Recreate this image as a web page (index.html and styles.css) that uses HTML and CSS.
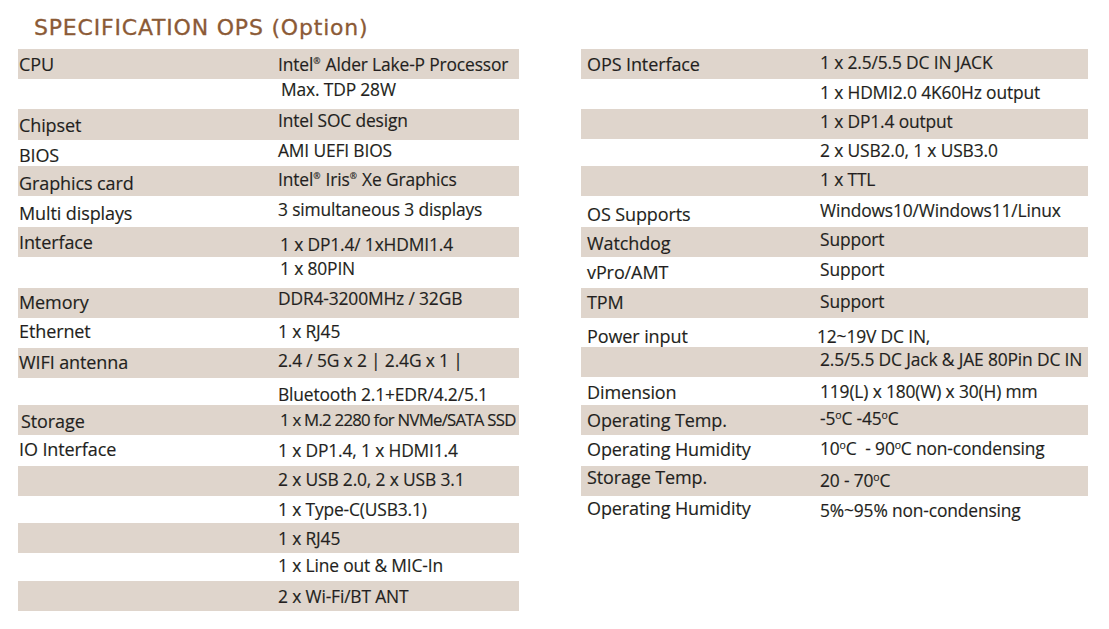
FILE: index.html
```html
<!DOCTYPE html>
<html lang="en">
<head>
<meta charset="utf-8">
<title>Specification OPS (Option)</title>
<link rel="stylesheet" href="styles.css">
</head>
<body>
<div class="page">
  <h1 class="title">SPECIFICATION OPS (Option)</h1>
  <div class="tables">
    <div class="spec spec-left">
      <div class="row h30"><span class="k c16">CPU</span><span class="v c16">Intel<sup>®</sup> Alder Lake-P Processor</span></div>
      <div class="row h30"><span class="k"></span><span class="v c10 in3">Max. TDP 28W</span></div>
      <div class="row h31"><span class="k c17">Chipset</span><span class="v c12">Intel SOC design</span></div>
      <div class="row h26"><span class="k c16">BIOS</span><span class="v c10">AMI UEFI BIOS</span></div>
      <div class="row h30"><span class="k c18">Graphics card</span><span class="v c14">Intel<sup>®</sup> Iris<sup>®</sup> Xe Graphics</span></div>
      <div class="row h31"><span class="k c18">Multi displays</span><span class="v c14">3 simultaneous 3 displays</span></div>
      <div class="row h30"><span class="k c16">Interface</span><span class="v c18 in2">1 x DP1.4/ 1xHDMI1.4</span></div>
      <div class="row h31"><span class="k"></span><span class="v c12 in2">1 x 80PIN</span></div>
      <div class="row h30"><span class="k c15">Memory</span><span class="v c10">DDR4-3200MHz / 32GB</span></div>
      <div class="row h30"><span class="k c14">Ethernet</span><span class="v c14">1 x RJ45</span></div>
      <div class="row h30"><span class="k c15">WIFI antenna</span><span class="v c13">2.4 / 5G x 2 | 2.4G x 1 |</span></div>
      <div class="row h27"><span class="k"></span><span class="v c17">Bluetooth 2.1+EDR/4.2/5.1</span></div>
      <div class="row h30"><span class="k c17 in2">Storage</span><span class="v c16 in2 tight">1 x M.2 2280 for NVMe/SATA SSD</span></div>
      <div class="row h31"><span class="k c15">IO Interface</span><span class="v c16">1 x DP1.4, 1 x HDMI1.4</span></div>
      <div class="row h30"><span class="k"></span><span class="v c14">2 x USB 2.0, 2 x USB 3.1</span></div>
      <div class="row h27"><span class="k"></span><span class="v c14">1 x Type-C(USB3.1)</span></div>
      <div class="row h30"><span class="k"></span><span class="v c16">1 x RJ45</span></div>
      <div class="row h28"><span class="k"></span><span class="v c13">1 x Line out &amp; MIC-In</span></div>
      <div class="row h30"><span class="k"></span><span class="v c16">2 x Wi-Fi/BT ANT</span></div>
    </div>
    <div class="spec spec-right">
      <div class="row h30"><span class="k c16">OPS Interface</span><span class="v c14">1 x 2.5/5.5 DC IN JACK</span></div>
      <div class="row h30"><span class="k"></span><span class="v c14">1 x HDMI2.0 4K60Hz output</span></div>
      <div class="row h30"><span class="k"></span><span class="v c13">1 x DP1.4 output</span></div>
      <div class="row h27"><span class="k"></span><span class="v c12">2 x USB2.0, 1 x USB3.0</span></div>
      <div class="row h30"><span class="k"></span><span class="v c14">1 x TTL</span></div>
      <div class="row h31"><span class="k c19">OS Supports</span><span class="v c15">Windows10/Windows11/Linux</span></div>
      <div class="row h30"><span class="k c17">Watchdog</span><span class="v c13">Support</span></div>
      <div class="row h31"><span class="k c16">vPro/AMT</span><span class="v c13">Support</span></div>
      <div class="row h30"><span class="k c15">TPM</span><span class="v c14">Support</span></div>
      <div class="row h29"><span class="k c19">Power input</span><span class="v c19 out3">12~19V DC IN,</span></div>
      <div class="row h30"><span class="k"></span><span class="v c13">2.5/5.5 DC Jack &amp; JAE 80Pin DC IN</span></div>
      <div class="row h28"><span class="k c16">Dimension</span><span class="v c15">119(L) x 180(W) x 30(H) mm</span></div>
      <div class="row h30"><span class="k c16">Operating Temp.</span><span class="v c14">-5<sup class="deg">o</sup>C -45<sup class="deg">o</sup>C</span></div>
      <div class="row h31"><span class="k c15">Operating Humidity</span><span class="v c14">10<sup class="deg">o</sup>C&nbsp; - 90<sup class="deg">o</sup>C non-condensing</span></div>
      <div class="row h30"><span class="k c12">Storage Temp.</span><span class="v c15">20 - 70<sup class="deg">o</sup>C</span></div>
      <div class="row h29"><span class="k c13">Operating Humidity</span><span class="v c15">5%~95% non-condensing</span></div>
    </div>
  </div>
</div>
</body>
</html>
```
FILE: styles.css
```css
* { box-sizing: border-box; }

html, body {
  margin: 0;
  padding: 0;
  background: #ffffff;
}

.page {
  width: 1109px;
  height: 629px;
  color: #231f20;
  font-family: "Open Sans", "Noto Sans", sans-serif;
}

.title {
  margin: 0;
  height: 49px;
  padding: 17px 0 0 34px;
  font-family: "DejaVu Sans", sans-serif;
  font-weight: normal;
  font-size: 22px;
  line-height: 22px;
  letter-spacing: 0.8px;
  color: #8b5a36;
  -webkit-text-stroke: 0.3px #8b5a36;
}

.tables {
  display: flex;
  padding-left: 18px;
  gap: 62px;
}

.spec {
  display: flex;
  flex-direction: column;
}

.spec-left { width: 501px; }
.spec-right { width: 507px; }

.row {
  display: grid;
  align-items: start;
}

.spec-left .row { grid-template-columns: 260px 1fr; }
.spec-right .row { grid-template-columns: 239px 1fr; }

.row:nth-child(odd) { background: #dfd5cc; }

.h26 { height: 26px; }
.h27 { height: 27px; }
.h28 { height: 28px; }
.h29 { height: 29px; }
.h30 { height: 30px; }
.h31 { height: 31px; }

.k, .v {
  display: block;
  white-space: nowrap;
  line-height: 20px;
  -webkit-text-stroke: 0.15px #231f20;
}

.k {
  font-size: 18px;
  letter-spacing: -0.1px;
}

.spec-left .k { padding-left: 1px; }
.spec-right .k { padding-left: 6px; }

.v {
  font-size: 17.4px;
  letter-spacing: -0.15px;
}

.tight {
  font-size: 16.8px;
  letter-spacing: -0.75px;
}

.in2 { margin-left: 2px; }
.in3 { margin-left: 3px; }
.out3 { margin-left: -3px; }

.c10 { padding-top: 0; }
.c12 { padding-top: 1px; }
.c13 { padding-top: 2px; }
.c14 { padding-top: 3px; }
.c15 { padding-top: 4px; }
.c16 { padding-top: 5px; }
.c17 { padding-top: 6px; }
.c18 { padding-top: 7px; }
.c19 { padding-top: 8px; }

sup {
  font-size: 0.5em;
  line-height: 0;
  vertical-align: 0.75em;
  margin: 0 1px 0 0;
}

sup.deg {
  font-size: 0.6em;
  vertical-align: 0.55em;
  margin: 0;
}
```
